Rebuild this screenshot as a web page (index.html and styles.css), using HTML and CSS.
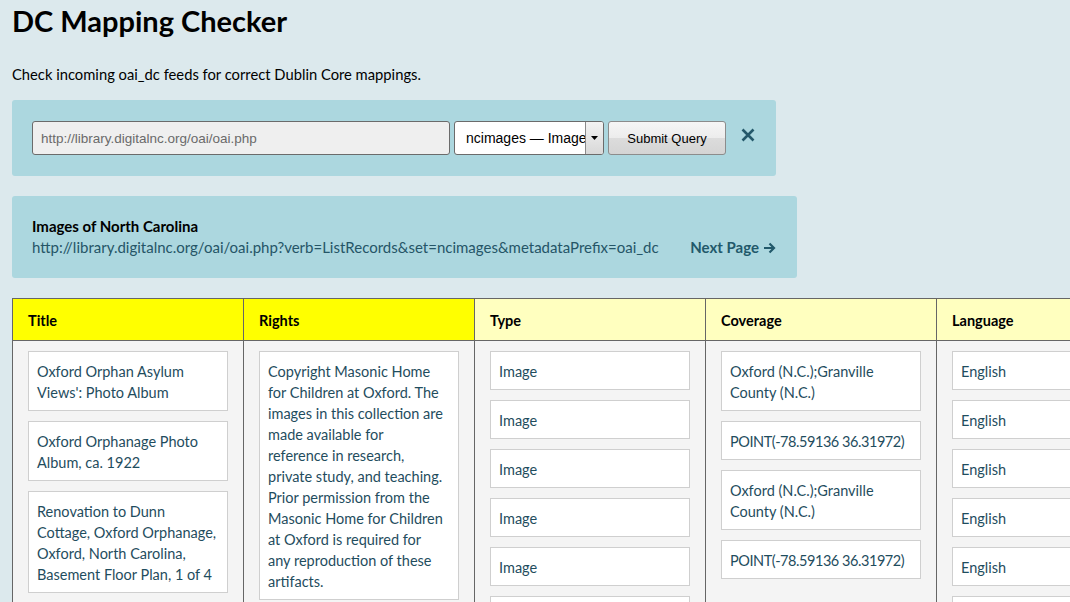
FILE: index.html
```html
<!DOCTYPE html>
<html lang="en">
<head>
<meta charset="utf-8">
<title>DC Mapping Checker</title>
<link rel="stylesheet" href="styles.css">
</head>
<body>
<h1 class="title">DC Mapping Checker</h1>
<p class="intro">Check incoming oai_dc feeds for correct Dublin Core mappings.</p>

<form class="query-panel">
  <input class="url-input" type="text" value="http://library.digitalnc.org/oai/oai.php">
  <div class="select">
    <span class="select-text">ncimages — Images of North Carolina</span>
    <span class="select-arrow"><svg width="7" height="4" viewBox="0 0 7 4"><path d="M0 0H7L3.5 4Z" fill="#000"/></svg></span>
  </div>
  <button class="submit" type="button">Submit Query</button>
  <span class="clear"><svg width="14" height="14" viewBox="0 0 14 14"><path d="M1.5 1.5L12.5 12.5M12.5 1.5L1.5 12.5" stroke="#24586a" stroke-width="2.6" stroke-linecap="butt"/></svg></span>
</form>

<div class="set-panel">
  <div class="set-info">
    <div class="set-name">Images of North Carolina</div>
    <div class="set-url">http://library.digitalnc.org/oai/oai.php?verb=ListRecords&amp;set=ncimages&amp;metadataPrefix=oai_dc</div>
  </div>
  <a class="next-page">Next Page <svg width="13" height="12" viewBox="0 0 13 12"><path d="M1 6H11M6.5 1.5L11 6L6.5 10.5" stroke="#22596b" stroke-width="2.2" fill="none"/></svg></a>
</div>

<div class="records">
  <div class="head head-hot">Title</div>
  <div class="head head-hot">Rights</div>
  <div class="head">Type</div>
  <div class="head">Coverage</div>
  <div class="head">Language</div>

  <div class="cell">
    <div class="card">Oxford Orphan Asylum Views': Photo Album</div>
    <div class="card">Oxford Orphanage Photo Album, ca. 1922</div>
    <div class="card">Renovation to Dunn Cottage, Oxford Orphanage, Oxford, North Carolina, Basement Floor Plan, 1 of 4</div>
  </div>
  <div class="cell">
    <div class="card card-lines">Copyright Masonic Home<br>for Children at Oxford. The<br>images in this collection are<br>made available for<br>reference in research,<br>private study, and teaching.<br>Prior permission from the<br>Masonic Home for Children<br>at Oxford is required for<br>any reproduction of these<br>artifacts.</div>
  </div>
  <div class="cell">
    <div class="card">Image</div>
    <div class="card">Image</div>
    <div class="card">Image</div>
    <div class="card">Image</div>
    <div class="card">Image</div>
    <div class="card">Image</div>
  </div>
  <div class="cell">
    <div class="card">Oxford (N.C.);Granville County (N.C.)</div>
    <div class="card card-tight">POINT(-78.59136 36.31972)</div>
    <div class="card">Oxford (N.C.);Granville County (N.C.)</div>
    <div class="card card-tight">POINT(-78.59136 36.31972)</div>
  </div>
  <div class="cell">
    <div class="card">English</div>
    <div class="card">English</div>
    <div class="card">English</div>
    <div class="card">English</div>
    <div class="card">English</div>
    <div class="card">English</div>
  </div>
</div>
</body>
</html>
```

FILE: styles.css
```css
html, body {
  overflow: hidden;
}
body {
  margin: 0;
  padding: 0 12px;
  background: #dce9ed;
  font-family: Lato, "Liberation Sans", sans-serif;
  color: #000;
  width: 1300px;
}
.title {
  margin: 0;
  padding-top: 3px;
  font-size: 29px;
  font-weight: 700;
  line-height: 36px;
}
.intro {
  margin: 0;
  padding-top: 25px;
  font-size: 14.75px;
  line-height: 20px;
}
.query-panel {
  margin-top: 16px;
  width: 724px;
  padding: 21px 20px;
  background: #acd7df;
  border-radius: 3px;
  display: flex;
  align-items: center;
  gap: 4px;
}
.url-input {
  box-sizing: border-box;
  width: 418px;
  height: 34px;
  margin: 0;
  padding: 0 8px;
  border: 1px solid #6b6b6b;
  border-radius: 3px;
  background: #efefef;
  font-family: "Liberation Sans", Arial, sans-serif;
  font-size: 13.5px;
  color: #6a6a6a;
}
.select {
  box-sizing: border-box;
  width: 150px;
  height: 34px;
  border: 1px solid #6b6b6b;
  border-radius: 3px;
  background: #fff;
  display: flex;
  overflow: hidden;
}
.select-text {
  flex: 1;
  overflow: hidden;
  white-space: nowrap;
  padding-left: 11px;
  line-height: 32px;
  font-family: "Liberation Sans", Arial, sans-serif;
  font-size: 14px;
  color: #000;
}
.select-arrow {
  width: 17px;
  border-left: 1px solid #8a8a8a;
  background: linear-gradient(#f3f3f3, #d8d8d8);
  display: flex;
  align-items: center;
  justify-content: center;
}
.submit {
  box-sizing: border-box;
  width: 118px;
  height: 34px;
  margin: 0;
  border: 1px solid #8c8c8c;
  border-radius: 3px;
  background: linear-gradient(#f6f6f6 0%, #ececec 50%, #dcdcdc 51%, #d4d4d4 100%);
  font-family: "Liberation Sans", Arial, sans-serif;
  font-size: 13px;
  color: #000;
  padding: 0;
}
.clear {
  margin-left: 11px;
  display: flex;
  margin-top: -7px;
}
.set-panel {
  margin-top: 20px;
  width: 745px;
  padding: 20px 20px;
  background: #acd7df;
  border-radius: 3px;
  display: flex;
  align-items: flex-end;
  justify-content: space-between;
  line-height: 21px;
  font-size: 15px;
}
.set-name {
  font-weight: 700;
  color: #000;
}
.set-url {
  color: #255567;
}
.next-page {
  font-weight: 700;
  color: #22596b;
  display: flex;
  align-items: center;
  gap: 4px;
  margin-right: 1px;
}
.records {
  margin-top: 20px;
  display: grid;
  grid-template-columns: repeat(5, 230px);
  gap: 1px;
  background: #666;
  border: 1px solid #666;
  width: max-content;
}
.head {
  box-sizing: border-box;
  height: 41px;
  padding: 2px 0 0 15px;
  display: flex;
  align-items: center;
  background: #ffffbf;
  font-weight: 700;
  font-size: 14.5px;
}
.head-hot {
  background: #ffff00;
}
.cell {
  background: #f4f4f4;
  padding: 10px 15px 20px;
  display: flex;
  flex-direction: column;
  gap: 10px;
}
.card {
  width: 200px;
  box-sizing: border-box;
  background: #fff;
  border: 1px solid #cfcfcf;
  padding: 9px 8px 7px;
  font-size: 14.5px;
  line-height: 21px;
  color: #1f4d5e;
}
.card-lines {
  white-space: nowrap;
}
.card-tight {
  white-space: nowrap;
  letter-spacing: -0.45px;
}
```
